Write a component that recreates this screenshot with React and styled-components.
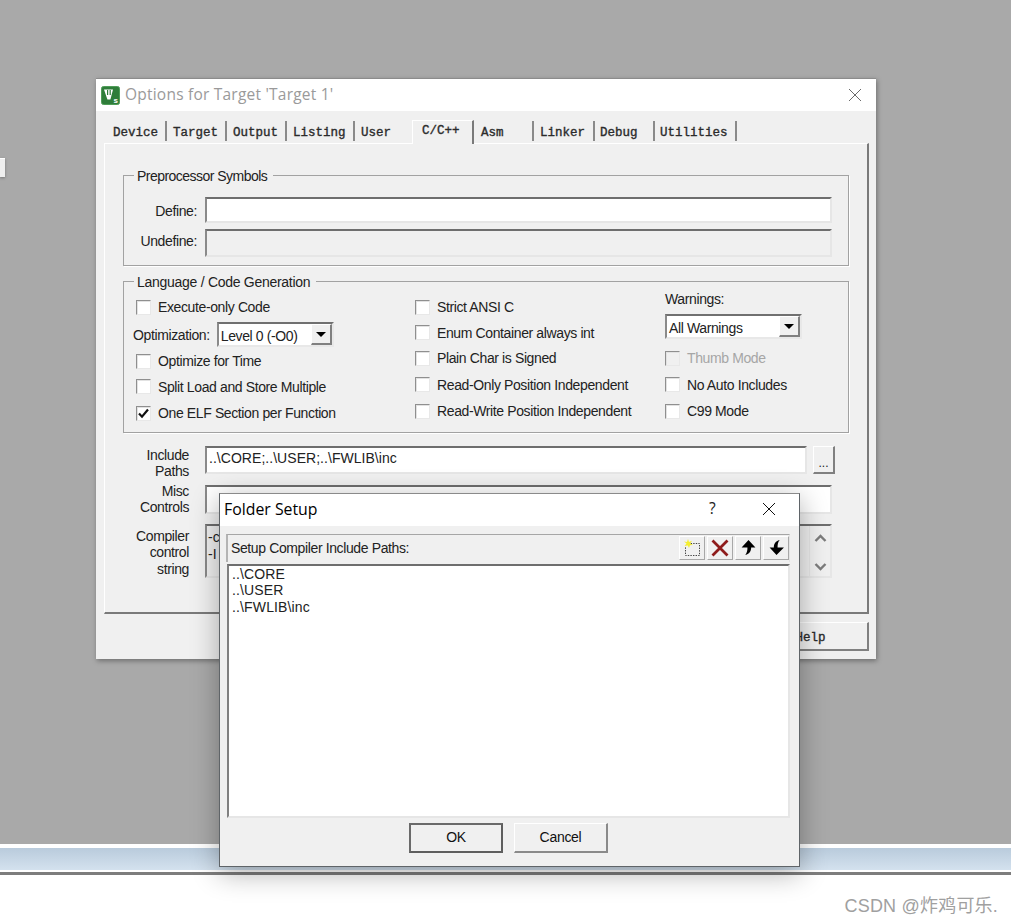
import React from 'react';
import styled, { createGlobalStyle } from 'styled-components';

const Global = createGlobalStyle`
  html, body { margin: 0; padding: 0; background: #fff; }
  body { width: 1011px; height: 924px; overflow: hidden; font-family: "Liberation Sans", Arial, sans-serif; }
`;
const Page = styled.div`display: flex; flex-direction: column; width: 1011px; height: 924px;`;
const Desktop = styled.div`position: relative; z-index: 1; height: 844px; background: #a9a9a9; flex: none;`;
const Sliver = styled.div`
  position: absolute; left: 0; top: 158px; width: 5px; height: 19px; background: #efefef;
  border-top: 1px solid #fff; box-sizing: border-box; box-shadow: 0 1px 3px rgba(0,0,0,.3);
`;
const Band = styled.div`
  flex: none; height: 31px; box-sizing: border-box; border-top: 4px solid #fff;
  border-bottom: 3px solid #7d7d7d; background: linear-gradient(#b9cbdc 0%, #d3e1ee 90%, #fff 92%);
`;
const Footer = styled.div`flex: 1; display: flex; justify-content: flex-end; align-items: flex-start; padding: 21px 13px 0 0; background: #fff;`;
const Watermark = styled.span`
  font: 18px/20px "Liberation Sans", "Noto Sans CJK SC", sans-serif; color: #a0a0a0; letter-spacing: .2px;
`;

const Win = styled.div`
  position: absolute; box-sizing: border-box; background: #f0f0f0; display: flex; flex-direction: column;
`;
const OptionsWin = styled(Win)`
  left: 96px; top: 78px; width: 780px; height: 581px; border-top: 1px solid #8c8c8c;
  box-shadow: 1px 2px 5px rgba(0,0,0,.35);
`;
const FolderWin = styled(Win)`
  left: 219px; top: 493px; width: 581px; height: 374px; border: 1px solid #5f6468; border-top-color: #8a8a8a;
  box-shadow: 0 6px 26px rgba(0,0,0,.32);
`;
const TitleBar = styled.div`flex: none; display: flex; align-items: center; background: #fff; position: relative;`;
const OptionsTitleBar = styled(TitleBar)`height: 32px; padding-left: 5px; gap: 5px;`;
const OptionsTitle = styled.span`font: 15.5px "Open Sans", sans-serif; color: #9a9a9a; letter-spacing: .22px; padding-bottom: 2px;`;
const FolderTitleBar = styled(TitleBar)`height: 32px; padding-left: 4px;`;
const FolderTitle = styled.span`font: 15.85px "Open Sans", sans-serif; color: #000; flex: 1; padding-bottom: 3px;`;
const TitleIcons = styled.div`display: flex; align-items: center; margin-left: auto;`;
const Help = styled.span`font: 15.5px "Open Sans", sans-serif; color: #222; width: 53px; text-align: left; padding-bottom: 4px;`;
const CloseSlot = styled.div`width: ${p => p.$w}px; display: flex; height: 14px; margin-bottom: ${p => p.$mb || 0}px;`;

const Body = styled.div`flex: 1; padding: 10px 7px 0 8px; display: flex; flex-direction: column;`;
const Tabs = styled.div`display: flex; height: 22px; margin-left: 3px; align-items: flex-end; position: relative; z-index: 1;`;
const Tab = styled.div`
  box-sizing: border-box; width: ${p => p.$w}px; height: ${p => p.$active ? 24 : 20}px;
  font: 12.5px/24px "Liberation Mono", monospace; color: #2b2b2b; -webkit-text-stroke: .35px #2b2b2b;
  padding-left: ${p => p.$pad || 6}px; white-space: pre;
  border-right: 2px solid ${p => p.$plain ? 'transparent' : '#8a8a8a'};
  ${p => p.$active ? `
    background: #f0f0f0; border-top: 1px solid #fff; border-left: 1px solid #fff; line-height: 21px;
    margin-bottom: -1px; border-right-color: #7a7a7a;
  ` : 'margin-bottom: 2px;'}
`;
const Panel = styled.div`
  height: 471px; box-sizing: border-box; border-top: 1px solid #fff; border-left: 1px solid #fff;
  border-right: 2px solid #7a7a7a; border-bottom: 2px solid #7a7a7a;
  padding: 31px 0 0 18px;
`;
const Group = styled.div`
  position: relative; box-sizing: border-box; width: 726px; height: ${p => p.$h}px; margin-top: ${p => p.$mt || 0}px;
  border: 1px solid #a2a2a2; box-shadow: 1px 1px 0 #fff;
`;
const Legend = styled.span`
  position: absolute; top: -8px; left: 10px; padding: 0 6px 0 3px; background: #f0f0f0;
  font: 14px/16px "Liberation Sans", sans-serif; letter-spacing: ${p => p.$ls}px; color: #222;
`;
const FieldRow = styled.div`
  display: grid; grid-template-columns: ${p => p.$label || 73}px 1fr; grid-template-rows: ${p => p.$h}px;
  column-gap: ${p => p.$gap || 8}px; align-items: center; margin-top: ${p => p.$mt || 0}px;
`;
const PreBody = styled.div`padding-top: 21px;`;
const FieldLabel = styled.label`
  font: 14px/16px "Liberation Sans", sans-serif; letter-spacing: -.38px; color: #222; text-align: right;
  padding-top: ${p => p.$pt || 0}px; padding-bottom: ${p => p.$pb || 0}px;
`;
const Inset = styled.div`
  box-sizing: border-box; height: ${p => p.$h}px; width: ${p => p.$w || 627}px;
  background: ${p => p.$disabled ? '#f0f0f0' : '#fff'};
  border-top: 2px solid #6e6e6e; border-left: 2px solid #8a8a8a;
  border-right: 2px solid #e6e6e6; border-bottom: 2px solid #e6e6e6;
  font: 14px/16px "Liberation Sans", sans-serif; letter-spacing: .04px; color: #222;
`;
const PathText = styled.div`padding: 2px 0 0 2px; white-space: nowrap;`;

const LangGrid = styled.div`
  display: grid; grid-template-columns: 279px 250px 1fr; padding: 12px 0 0 12px;
`;
const Col = styled.div`display: flex; flex-direction: column;`;
const CheckRow = styled.div`
  display: flex; align-items: center; gap: 7px; height: ${p => p.$h || 26}px;
  font: 14px/16px "Liberation Sans", sans-serif; letter-spacing: -.38px;
  color: ${p => p.$off ? '#a6a6a6' : '#222'}; white-space: nowrap;
`;
const Box = styled.span`
  box-sizing: border-box; flex: none; width: 15px; height: 15px; display: flex; align-items: center; justify-content: center;
  background: ${p => p.$off ? '#f0f0f0' : '#fff'};
  border-top: 1px solid #8f8f8f; border-left: 1px solid #8f8f8f;
  border-right: 1px solid #e8e8e8; border-bottom: 1px solid #e8e8e8;
  box-shadow: inset 1px 1px 0 #e2e2e2;
`;
const OptRow = styled.div`
  display: flex; align-items: center; gap: 7px; height: 29px; margin-left: -3px;
  font: 14px/16px "Liberation Sans", sans-serif; letter-spacing: -.38px; color: #222;
`;
const Combo = styled.div`
  box-sizing: border-box; display: flex; align-items: center; justify-content: space-between;
  width: ${p => p.$w}px; height: 25px; background: #fff; padding-left: 2px;
  border-top: 2px solid #707070; border-left: 2px solid #8a8a8a;
  border-right: 2px solid #e8e8e8; border-bottom: 2px solid #e8e8e8;
  font: 14px/16px "Liberation Sans", sans-serif; letter-spacing: -.38px; color: #222;
`;
const ComboText = styled.span`padding-top: 2px; white-space: nowrap;`;
const ComboBtn = styled.span`
  box-sizing: border-box; width: 21px; height: 21px; background: #f0f0f0; display: flex; align-items: center; justify-content: center;
  border-top: 1px solid #fff; border-left: 1px solid #fff;
  border-right: 2px solid #808080; border-bottom: 2px solid #808080;
`;
const Arrow = styled.span`width: 0; height: 0; border: 5px solid transparent; border-top: 5px solid #000; border-bottom: 0;`;
const WarnLabel = styled.div`height: 14px; margin-top: -2px; margin-bottom: 8px; font: 14px/14px "Liberation Sans", sans-serif; letter-spacing: -.38px; color: #222;`;
const WarnGap = styled.div`height: 6px;`;

const MultiLabel = styled(FieldLabel)`display: block; line-height: ${p => p.$lh || 16}px;`;
const IncludeInputs = styled.div`display: flex; gap: 6px; align-items: center;`;
const DotsBtn = styled.button`
  box-sizing: border-box; width: 22px; height: 28px; padding: 6px 0 0; background: #f0f0f0;
  border-top: 1px solid #fff; border-left: 1px solid #fff;
  border-right: 2px solid #808080; border-bottom: 2px solid #808080;
  font: 12px/12px "Liberation Sans", sans-serif; color: #222;
`;
const CtrlBox = styled(Inset)`display: flex; justify-content: space-between; overflow: hidden;`;
const CtrlText = styled.div`padding: 3px 0 0 1px; line-height: 17px; letter-spacing: 0;`;
const CtrlScroll = styled.div`
  width: 21px; display: flex; flex-direction: column; align-items: center; justify-content: space-between; padding: 8px 0 5px;
  border-left: 1px solid #e6e6e6; box-sizing: border-box;
`;
const BottomRow = styled.div`display: flex; justify-content: flex-end; margin-top: 8px;`;
const HelpBtn = styled.button`
  box-sizing: border-box; width: 116px; height: 29px; padding: 3px 0 0; background: #f0f0f0; text-align: center;
  border-top: 1px solid #fff; border-left: 1px solid #fff;
  border-right: 2px solid #808080; border-bottom: 2px solid #808080;
  font: 12.5px "Liberation Mono", monospace; color: #2b2b2b; -webkit-text-stroke: .35px #2b2b2b;
`;

const FolderBody = styled.div`flex: 1; padding: 8px 9px 0 6px; display: flex; flex-direction: column;`;
const Toolbar = styled.div`
  box-sizing: border-box; height: 28px; display: flex; align-items: center; justify-content: space-between;
  border-top: 1px solid #a6a6a6; border-left: 2px solid #b4b4b4; border-right: 1px solid #e4e4e4; padding: 0 0 2px 3px;
  font: 14px/16px "Liberation Sans", sans-serif; letter-spacing: -.38px; color: #222;
`;
const ToolBtns = styled.div`display: flex; gap: 2px;`;
const ToolBtn = styled.div`
  box-sizing: border-box; width: 26px; height: 24px; display: flex; align-items: center; justify-content: center;
  border-top: 1px solid #fff; border-left: 1px solid #fff;
  border-right: 1px solid #a8a8a8; border-bottom: 1px solid #a8a8a8;
`;
const ListBox = styled.div`
  box-sizing: border-box; height: 254px; margin: 2px 0 0 1px; background: #fff; padding: 0 0 0 3px;
  border-top: 2px solid #6e6e6e; border-left: 2px solid #808080;
  border-right: 2px solid #e6e6e6; border-bottom: 2px solid #e6e6e6;
  font: 14px/16.4px "Liberation Sans", sans-serif; letter-spacing: .14px; color: #222;
`;
const DialogBtns = styled.div`display: flex; gap: 11px; padding: 5px 0 0 183px;`;
const DlgBtn = styled.button`
  box-sizing: border-box; width: 94px; height: 30px; padding: 0 0 2px; background: #f0f0f0;
  font: 14px "Liberation Sans", sans-serif; letter-spacing: -.28px; color: #111;
  border-top: ${p => p.$def ? '2px solid #6a6a6a' : '1px solid #fff'};
  border-left: ${p => p.$def ? '2px solid #6a6a6a' : '1px solid #fff'};
  border-right: 2px solid ${p => p.$def ? '#5e5e5e' : '#8a8a8a'};
  border-bottom: 2px solid ${p => p.$def ? '#5e5e5e' : '#8a8a8a'};
`;

const KeilIcon = () => (
  <svg width="19" height="19" viewBox="0 0 19 19">
    <rect x=".5" y=".5" width="18" height="18" rx="2" fill="#2f7d3a" stroke="#4f9d58" />
    <path d="M3 3.5h9l-2.6 10H6.4z" fill="#fff" />
    <path d="M6 4h1.2v5H6zM8.6 4h1.2v5H8.6z" fill="#2f7d3a" />
    <text x="12.5" y="16.5" fontFamily="Liberation Sans" fontWeight="700" fontSize="8" fill="#fff">s</text>
  </svg>
);
const CloseIcon = ({ color = '#6b6b6b' }) => (
  <svg width="14" height="14" viewBox="0 0 14 14"><path d="M1 1l12 12M13 1L1 13" stroke={color} strokeWidth="1" fill="none" /></svg>
);
const Check = () => (
  <svg width="11" height="11" viewBox="0 0 11 11"><path d="M1 5.500l3 3.200L10 1.500" stroke="#111" strokeWidth="2.200" fill="none" /></svg>
);
const Chevron = ({ down }) => (
  <svg width="13" height="9" viewBox="0 0 13 9"><path d={down ? 'M1.500 2l5 5 5-5' : 'M1.500 7l5-5 5 5'} stroke="#7c7c7c" strokeWidth="2.400" fill="none" /></svg>
);
const NewFolderIcon = () => (
  <svg width="18" height="18" viewBox="0 0 18 18">
    <path d="M5 4.500h11.500v12H2.500V8" fill="none" stroke="#444" strokeWidth="1" strokeDasharray="1.400 1.200" />
    <path d="M5 0l1 3 3-1.200-1.800 2.600L10 6l-3 .3L6 9 4.800 6.400 1.500 7l2-2.500L1 2.500l3 .4z" fill="#f4ee30" />
  </svg>
);
const DeleteIcon = () => (
  <svg width="20" height="20" viewBox="0 0 20 20"><path d="M2.500 2.500l15 15M17.500 2.500l-15 15" stroke="#8e1b1b" strokeWidth="2.800" fill="none" /></svg>
);
const UpIcon = () => (
  <svg width="17" height="17" viewBox="0 0 16 16"><path d="M8 1l6.500 7H10.500c0 3-1.200 6-5.500 7 1.600-2 2-4 2-7H1.500z" fill="#000" /></svg>
);
const DownIcon = () => (
  <svg width="17" height="17" viewBox="0 0 16 16"><path d="M8 15L1.500 8H5.500c0-3 1.200-6 5.500-7-1.600 2-2 4-2 7h6z" fill="#000" /></svg>
);

const tabs = [
  ['Device', 60], ['Target', 60], ['Output', 60], ['Listing', 68], ['User', 57, 6, true],
  ['C/C++', 62, 9, false, true], ['Asm', 60, 7], ['Linker', 61], ['Debug', 60, 5], ['Utilities', 82, 5],
];

const Check1 = ({ label, h, checked, off }) => (
  <CheckRow $h={h} $off={off}><Box $off={off}>{checked && <Check />}</Box>{label}</CheckRow>
);

export default function App() {
  return (
    <Page>
      <Global />
      <Desktop>
        <Sliver />
        <OptionsWin>
          <OptionsTitleBar>
            <KeilIcon />
            <OptionsTitle>Options for Target 'Target 1'</OptionsTitle>
            <TitleIcons><CloseSlot $w={28}><CloseIcon /></CloseSlot></TitleIcons>
          </OptionsTitleBar>
          <Body>
            <Tabs>
              {tabs.map(([t, w, pad, plain, active]) => (
                <Tab key={t} $w={w} $pad={pad} $plain={plain} $active={active}>{t}</Tab>
              ))}
            </Tabs>
            <Panel>
              <Group $h={91}>
                <Legend $ls={-.53}>Preprocessor Symbols</Legend>
                <PreBody>
                  <FieldRow $h={26}><FieldLabel $pt={2}>Define:</FieldLabel><Inset $h={26} /></FieldRow>
                  <FieldRow $h={28} $mt={6}><FieldLabel $pb={4}>Undefine:</FieldLabel><Inset $h={28} $disabled /></FieldRow>
                </PreBody>
              </Group>
              <Group $h={152} $mt={15}>
                <Legend $ls={-.28}>Language / Code Generation</Legend>
                <LangGrid>
                  <Col>
                    <Check1 label="Execute-only Code" />
                    <OptRow>Optimization:
                      <Combo $w={117}><ComboText>Level 0 (-O0)</ComboText><ComboBtn><Arrow /></ComboBtn></Combo>
                    </OptRow>
                    <Check1 label="Optimize for Time" h={24} />
                    <Check1 label="Split Load and Store Multiple" h={27} />
                    <Check1 label="One ELF Section per Function" checked />
                  </Col>
                  <Col>
                    <Check1 label="Strict ANSI C" />
                    <Check1 label="Enum Container always int" h={25} />
                    <Check1 label="Plain Char is Signed" />
                    <Check1 label="Read-Only Position Independent" h={27} />
                    <Check1 label="Read-Write Position Independent" />
                  </Col>
                  <Col>
                    <WarnLabel>Warnings:</WarnLabel>
                    <Combo $w={137}><ComboText>All Warnings</ComboText><ComboBtn><Arrow /></ComboBtn></Combo>
                    <WarnGap />
                    <Check1 label="Thumb Mode" off />
                    <Check1 label="No Auto Includes" h={27} />
                    <Check1 label="C99 Mode" />
                  </Col>
                </LangGrid>
              </Group>
              <FieldRow $h={28} $label={66} $gap={16} $mt={13}>
                <MultiLabel $pt={6}>Include<br />Paths</MultiLabel>
                <IncludeInputs>
                  <Inset $h={28} $w={602}><PathText>..\CORE;..\USER;..\FWLIB\inc</PathText></Inset>
                  <DotsBtn>...</DotsBtn>
                </IncludeInputs>
              </FieldRow>
              <FieldRow $h={29} $label={66} $gap={16} $mt={11}>
                <MultiLabel $pb={2}>Misc<br />Controls</MultiLabel>
                <Inset $h={29} />
              </FieldRow>
              <FieldRow $h={54} $label={66} $gap={16} $mt={10}>
                <MultiLabel $lh={16.5} $pt={3}>Compiler<br />control<br />string</MultiLabel>
                <CtrlBox $h={54} $disabled>
                  <CtrlText>-c<br />-I</CtrlText>
                  <CtrlScroll><Chevron /><Chevron down /></CtrlScroll>
                </CtrlBox>
              </FieldRow>
            </Panel>
            <BottomRow><HelpBtn>Help</HelpBtn></BottomRow>
          </Body>
        </OptionsWin>

        <FolderWin>
          <FolderTitleBar>
            <FolderTitle>Folder Setup</FolderTitle>
            <TitleIcons>
              <Help>?</Help>
              <CloseSlot $w={37} $mb={2}><CloseIcon color="#111" /></CloseSlot>
            </TitleIcons>
          </FolderTitleBar>
          <FolderBody>
            <Toolbar>
              Setup Compiler Include Paths:
              <ToolBtns>
                <ToolBtn><NewFolderIcon /></ToolBtn>
                <ToolBtn><DeleteIcon /></ToolBtn>
                <ToolBtn><UpIcon /></ToolBtn>
                <ToolBtn><DownIcon /></ToolBtn>
              </ToolBtns>
            </Toolbar>
            <ListBox>
              <div>..\CORE</div>
              <div>..\USER</div>
              <div>..\FWLIB\inc</div>
            </ListBox>
            <DialogBtns>
              <DlgBtn $def>OK</DlgBtn>
              <DlgBtn>Cancel</DlgBtn>
            </DialogBtns>
          </FolderBody>
        </FolderWin>
      </Desktop>
      <Band />
      <Footer><Watermark>CSDN @炸鸡可乐.</Watermark></Footer>
    </Page>
  );
}
